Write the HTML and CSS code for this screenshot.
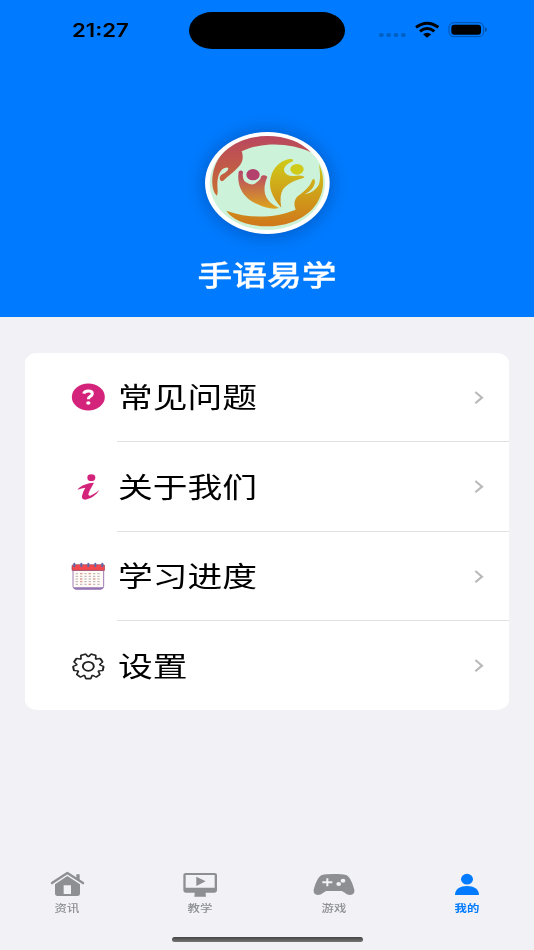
FILE: index.html
```html
<!DOCTYPE html>
<html lang="zh-CN">
<head>
<meta charset="utf-8">
<title>手语易学</title>
<link rel="stylesheet" href="styles.css">
</head>
<body>
<div class="app">
  <header class="hero">
    <div class="status">
      <div class="time"><span>21:27</span></div>
      <div class="island"></div>
      <svg class="signals" viewBox="0 0 360 60">
        <g fill="#0060c4"><rect x="18" y="39" width="14" height="12" rx="5"/><rect x="40" y="39" width="14" height="12" rx="5"/><rect x="62" y="39" width="14" height="12" rx="5"/><rect x="84" y="39" width="14" height="12" rx="5"/></g>
        <g fill="none" stroke="#000" stroke-width="9"><path d="M129 22Q162-3 196 22"/><path d="M141 34Q162 17 184 34"/></g>
        <path d="M150 43Q162 34 175 43L162 53Z"/>
        <rect x="228" y="8" width="104" height="42" rx="14" fill="none" stroke="#0052a8" stroke-width="3"/>
        <rect x="235" y="14" width="89" height="30" rx="9"/>
        <path d="M336 22Q342 23 342 29T336 36Z" fill="#0052a8"/>
      </svg>
    </div>
    <svg class="logo" viewBox="44 50 374 306">
      <defs>
        <linearGradient id="flame" gradientUnits="userSpaceOnUse" x1="0" y1="62" x2="0" y2="332"><stop offset="0" stop-color="#b9475f"/><stop offset="1" stop-color="#d1811b"/></linearGradient>
        <linearGradient id="rose" x1="0" y1="0" x2="0" y2="1"><stop offset="0" stop-color="#b5436a"/><stop offset="1" stop-color="#dda51b"/></linearGradient>
        <linearGradient id="gold" gradientUnits="userSpaceOnUse" x1="0" y1="130" x2="0" y2="325"><stop offset="0" stop-color="#cfcb18"/><stop offset="1" stop-color="#d07a1b"/></linearGradient>
      </defs>
      <ellipse cx="231" cy="203" rx="187" ry="153" fill="#fff"/>
      <ellipse cx="231" cy="203" rx="173" ry="141" fill="#cdf2da"/>
      <path fill="url(#flame)" d="M79 241C63 226 62 185 73 155C93 96 163 62 230 62C285 62 333 80 362 111C304 83 216 78 154 108C160 124 158 143 144 155C130 171 114 181 98 197Q88 198 88 187Q89 180 97 176Q111 169 114 160Q113 154 103 158C89 163 82 182 81 204C81 220 84 235 79 241Z"/>
      <path fill="url(#gold)" d="M386 146C402 181 402 217 389 245C368 299 305 332 234 333C177 333 126 315 108 286C174 311 252 309 316 283C309 264 312 249 327 239C343 226 358 215 366 193Q373 186 374 201C370 221 356 231 342 237C363 234 379 221 386 207C392 187 388 166 386 146Z"/>
      <ellipse cx="188" cy="178" rx="20" ry="17" fill="#b3416c"/>
      <path fill="url(#rose)" d="M145 169Q151 162 158 169Q154 192 167 201Q187 215 204 197Q212 190 213 182Q221 177 231 184Q219 211 224 235Q230 261 266 278Q240 285 202 267C154 246 139 208 145 169Z"/>
      <ellipse cx="320" cy="162" rx="20" ry="16" fill="#cfcb18"/>
      <path fill="url(#gold)" d="M299 131Q310 129 308 138C287 146 277 158 283 171Q291 185 317 181Q341 179 342 187C319 193 294 201 278 222Q266 243 273 277C244 244 230 213 245 174C255 150 276 134 299 131Z"/>
    </svg>
    <h1 class="name"><span>手语易学</span></h1>
  </header>

  <main class="menu">
    <a class="row">
      <svg class="icon" viewBox="0 0 102 84"><ellipse cx="52" cy="42" rx="49.5" ry="40.5" fill="#d4237a"/><path d="M38 32Q40 24 52 24Q64 24 64 32Q64 37 57 41Q52 44 52 49" fill="none" stroke="#fff" stroke-width="9"/><ellipse cx="52" cy="60" rx="6.5" ry="5.5" fill="#fff"/></svg>
      <span class="label"><span>常见问题</span></span>
      <svg class="chevron" viewBox="0 0 30 40"><path d="M4 3L24 20L4 37"/></svg>
    </a>
    <a class="row">
      <svg class="icon" viewBox="0 0 102 84"><g fill="#d4237a"><ellipse cx="61" cy="14" rx="12" ry="10"/><path d="M19 50C31 36 49 30 69 29C62 42 54 54 52 64Q52 69 58 68Q69 64 85 51C77 66 58 78 42 80Q31 79 33 69Q35 57 43 44Q33 45 19 50Z"/></g></svg>
      <span class="label"><span>关于我们</span></span>
      <svg class="chevron" viewBox="0 0 30 40"><path d="M4 3L24 20L4 37"/></svg>
    </a>
    <a class="row">
      <svg class="icon" viewBox="0 0 102 84">
        <path d="M6 25V73Q6 80 13 80H91Q98 80 98 73V25Z" fill="#fffaf5" stroke="#a17ab5" stroke-width="3"/>
        <path d="M7 76H97Q96 83 89 83H15Q8 83 7 76Z" fill="#9573b2"/>
        <path d="M3 25V12Q3 8 8 8H96Q101 8 101 12V25Z" fill="#f4484c" stroke="#98435e" stroke-width="2"/>
        <g stroke="#5d68a8" stroke-width="6" stroke-linecap="round"><path d="M10 5V13M31 5V13M52 5V13M73 5V13M94 5V13"/></g>
        <g stroke="#aaa0aa" stroke-width="2.5" stroke-dasharray="7 6"><path d="M14 35H92M14 43H92M14 51H92M14 59H92M14 67H92"/></g>
        <g stroke="#ee9585" stroke-width="3"><path d="M27 35H34M53 35H60M27 51H34M66 51H73M27 59H34M53 67H60"/></g>
      </svg>
      <span class="label"><span>学习进度</span></span>
      <svg class="chevron" viewBox="0 0 30 40"><path d="M4 3L24 20L4 37"/></svg>
    </a>
    <a class="row">
      <svg class="icon" viewBox="0 0 102 84">
        <defs>
          <path id="tooth" d="M-8-26L-5-36H5L8-26V0H-8Z"/>
          <g id="gear"><circle r="28"/><use href="#tooth" transform="rotate(20)"/><use href="#tooth" transform="rotate(60)"/><use href="#tooth" transform="rotate(100)"/><use href="#tooth" transform="rotate(140)"/><use href="#tooth" transform="rotate(180)"/><use href="#tooth" transform="rotate(220)"/><use href="#tooth" transform="rotate(260)"/><use href="#tooth" transform="rotate(300)"/><use href="#tooth" transform="rotate(340)"/></g>
        </defs>
        <g transform="translate(52 43) scale(1.22 1)" stroke-linejoin="round"><use href="#gear" fill="#222" stroke="#222" stroke-width="7"/><use href="#gear" fill="#fff" transform="scale(.96)"/><circle r="13.5" fill="none" stroke="#222" stroke-width="4.8"/></g>
      </svg>
      <span class="label"><span>设置</span></span>
      <svg class="chevron" viewBox="0 0 30 40"><path d="M4 3L24 20L4 37"/></svg>
    </a>
  </main>

  <nav class="tabs">
    <a class="tab">
      <svg viewBox="0 0 126 84"><path d="M18 42L64 12L111 42" fill="none" stroke="#8e8f93" stroke-width="7" stroke-linecap="round" stroke-linejoin="round"/><path d="M91 16H101V37L91 31Z" fill="#8e8f93"/><path d="M64 21L102 46V73Q102 81 94 81H35Q27 81 27 73V46ZM53 49V75H75V49Z" fill="#8e8f93" fill-rule="evenodd"/></svg>
      <span>资讯</span>
    </a>
    <a class="tab">
      <svg viewBox="0 0 126 84"><path d="M20 12H107Q114 12 114 18V64Q114 71 107 71H80V77Q81 78 81 83H46Q46 78 47 77V71H20Q13 71 13 64V18Q13 12 20 12ZM20 18V56H107V18Z" fill="#8e8f93" fill-rule="evenodd"/><path d="M52 23L80 37L52 51Z" fill="#8e8f93"/></svg>
      <span>教学</span>
    </a>
    <a class="tab">
      <svg viewBox="0 0 126 84"><g transform="translate(0 -2)"><path d="M63 17C80 17 89 18 99 20C111 25 118 44 124 64Q126 78 111 80C100 80 94 70 85 68H41C32 70 26 80 15 80Q0 78 2 64C8 44 15 25 27 20Q38 17 63 17Z" fill="#8e8f93"/><path d="M43 30V54M28 42H58" stroke="#f2f1f6" stroke-width="6"/><g fill="#f2f1f6"><ellipse cx="90" cy="37" rx="7" ry="6"/><ellipse cx="77" cy="47" rx="7" ry="6"/></g></g></svg>
      <span>游戏</span>
    </a>
    <a class="tab active">
      <svg viewBox="0 0 126 84"><ellipse cx="63" cy="30.5" rx="18" ry="16" fill="#007bff"/><path d="M27 77C27 61 43 51 63 51S99 61 99 77Q99 78 95 78H31Q27 78 27 77Z" fill="#007bff"/></svg>
      <span>我的</span>
    </a>
  </nav>
  <div class="home-bar"></div>
</div>
</body>
</html>
```

FILE: styles.css
```css
* { box-sizing: border-box; }
body { margin: 0; font-family: Inter, "Noto Sans CJK SC", sans-serif; }
.app { width: 534px; height: 950px; display: flex; flex-direction: column; background: #f2f1f6; overflow: hidden; }
.hero { height: 317px; flex: none; background: #007bff; display: flex; flex-direction: column; align-items: center; }
.status { width: 100%; height: 60px; display: grid; grid-template-columns: 189px 156px 1fr; padding-top: 12px; }
.time { padding-left: 72px; height: 37px; line-height: 37px; font-size: 18px; font-weight: 600; }
.time span { display: inline-block; transform: scaleX(1.23); transform-origin: left; }
.island { height: 37px; border-radius: 23px / 18.5px; background: #000; }
.signals { width: 120px; height: 20px; margin: 8px 0 0 28px; }
.logo { width: 124.7px; height: 102px; margin-top: 72px; flex: none; overflow: visible; filter: drop-shadow(0 1px 10px rgba(0, 20, 60, .36)); }
.name { margin: 18px 0 0; height: 48px; line-height: 48px; font-size: 28.5px; font-weight: 500; color: #fff; -webkit-text-stroke: .3px #fff; }
.name span { display: inline-block; transform: scaleX(1.22); }
.menu { width: 484px; height: 357.5px; margin: 35.5px 0 0 25px; background: #fff; border-radius: 12px / 10px; display: grid; grid-template-rows: 89.5px 89.5px 89.5px 89px; flex: none; }
.row { display: grid; grid-template-columns: 34px 1fr 10px; column-gap: 11px; align-items: center; padding: 0 25px 0 46px; background: linear-gradient(#e1e1e3, #e1e1e3) right bottom / 392px 1px no-repeat; }
.row:last-child { background: none; }
.icon { width: 34px; height: 28px; display: block; }
.label { font-size: 28.5px; line-height: 42px; padding: 2px 0 0 2px; color: #000; }
.label span { display: inline-block; transform: scaleX(1.22); transform-origin: left; }
.chevron { width: 10px; height: 13.3px; overflow: visible; fill: none; stroke: #b9b9bb; stroke-width: 6.5; }
.tabs { margin-top: auto; height: 66px; display: grid; grid-template-columns: repeat(4, 1fr); flex: none; color: #8e8f93; }
.tab { display: flex; flex-direction: column; align-items: center; }
.tab svg { width: 42px; height: 28px; overflow: visible; }
.tab span { font-size: 10px; line-height: 14px; margin-top: 4px; font-weight: 500; transform: scaleX(1.24); }
.active { color: #007bff; }
.active span { font-weight: 700; }
.home-bar { width: 191px; height: 5px; margin: 2px 0 8px; align-self: center; border-radius: 3px; background: linear-gradient(#444, #777); flex: none; }
```
